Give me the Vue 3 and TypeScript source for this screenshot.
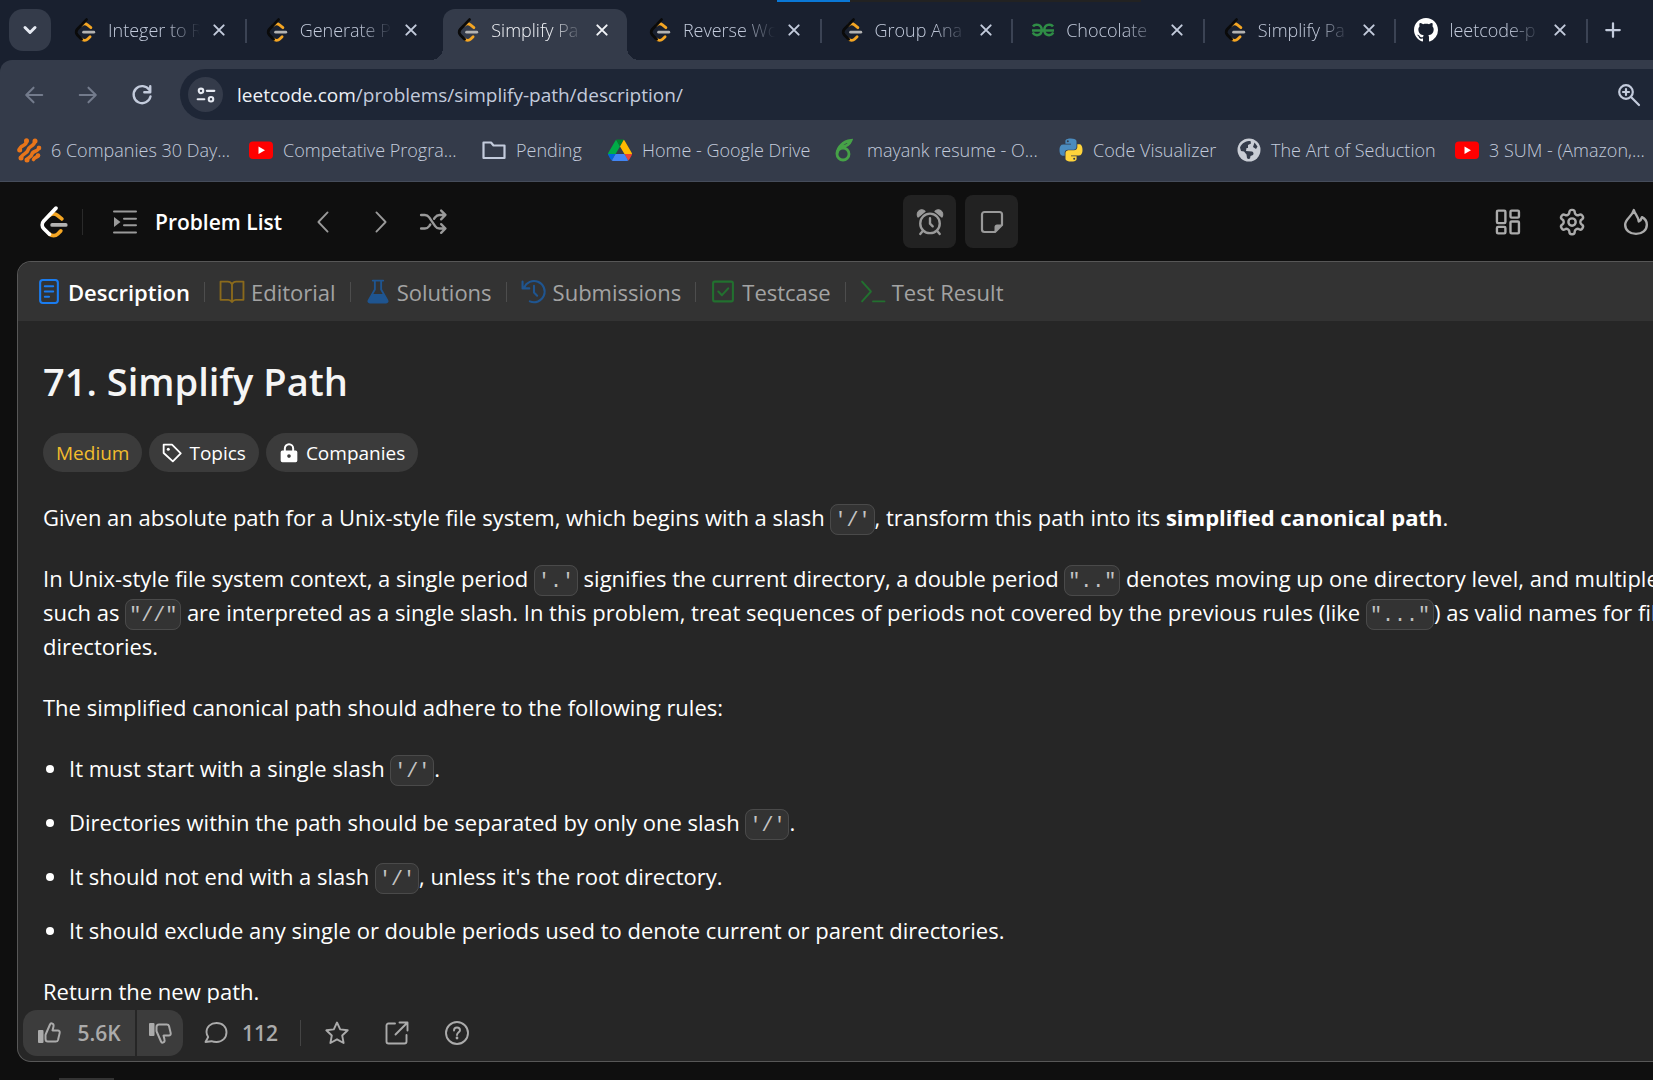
<script setup lang="ts">
interface BrowserTab { title: string; icon: string; active?: boolean }
interface Bookmark { label: string; icon: string; width: number }
interface PanelTab { label: string; icon: string; tone: string; active?: boolean }

const leet = (stem: string) =>
  `<g fill="none" stroke-width="2.8" stroke-linecap="round"><path stroke="#f5a623" d="M8.6 7.100c1.700-1.500 4.200-1.500 5.900-.2l3.400 2.800M8.600 21c1.700 1.700 4.500 1.700 6.200 0l2.300-2.300"/><path stroke="#b3b3b3" d="M10.600 14.200h10.200"/><path stroke="${stem}" stroke-linejoin="round" d="M13.500 1.600L4.300 11.300c-1.500 1.700-1.500 4.200.1 5.800L8.600 21.200"/></g>`

const s = (body: string, w = 2) =>
  `<g fill="none" stroke="currentColor" stroke-width="${w}" stroke-linecap="round" stroke-linejoin="round">${body}</g>`

const thumb =
  '<rect x="1" y="9" width="5.500" height="13" rx="1" fill="currentColor"/><g fill="none" stroke="currentColor" stroke-width="2" stroke-linejoin="round"><path d="M9.500 11.500L13 3.500c.3-.9 1-1.300 1.900-1.100 1.500.3 2 1.600 1.600 3l-1 4h5.300c1.300 0 2.200 1.200 1.900 2.500l-1.700 7c-.3 1.100-1.100 1.700-2.200 1.700H11c-1.500 0-2.500-1-2.500-2.500v-4.200z"/></g>'

const icons: Record<string, string> = {
  leetDark: leet('#0a0a0a'),
  leetLight: leet('#ffffff'),
  chevronDown: s('<path d="M7 9.500l5 5 5-5"/>', 3),
  close: s('<path d="M4 4l16 16M20 4L4 20"/>', 3.4),
  plus: s('<path d="M12 3v18M3 12h18"/>', 3),
  back: s('<path d="M21 12H4M11.500 4L3.500 12l8 8"/>', 2.200),
  forward: s('<path d="M3 12h17M12.500 4l8 8-8 8"/>', 2.200),
  reload: s('<path d="M20 6.500A9.300 9.300 0 1 0 21.300 13.500M21 2.500v6.500h-6.500"/>', 2.600),
  tune: s('<circle cx="6" cy="7" r="2.700"/><path d="M13 7h9M2 17h8"/><circle cx="18" cy="17" r="2.700"/>', 2.500),
  magnify: s('<circle cx="9" cy="9" r="6.800"/><path d="M14.500 14.500l7.500 7.500M9 6v6M6 9h6"/>', 2.200),
  gfg: '<g fill="none" stroke="#2f8d46" stroke-width="2.500"><path d="M2 8.500C4 5.500 10.700 6 10.700 12S4 18.500 1.800 14.500"/><path d="M1 12.500h22"/><path d="M22 8.500C20 5.500 13.300 6 13.300 12S20 18.500 22.200 14.500"/></g>',
  github: '<path transform="scale(1.5)" fill="#fff" d="M8 0C3.580 0 0 3.580 0 8c0 3.540 2.290 6.530 5.470 7.590.4.070.55-.17.55-.38 0-.19-.01-.82-.01-1.490-2.010.37-2.530-.49-2.690-.94-.09-.23-.48-.94-.82-1.130-.28-.15-.68-.52-.01-.53.63-.01 1.080.58 1.230.82.72 1.210 1.870.87 2.330.66.07-.52.28-.87.51-1.070-1.780-.2-3.640-.89-3.640-3.950 0-.87.31-1.590.82-2.150-.08-.2-.36-1.020.08-2.120 0 0 .67-.21 2.200.82.64-.18 1.320-.27 2-.27s1.360.09 2 .27c1.530-1.040 2.200-.82 2.200-.82.44 1.100.16 1.920.08 2.120.51.56.82 1.270.82 2.150 0 3.070-1.870 3.750-3.650 3.950.29.25.54.73.54 1.480 0 1.070-.01 1.930-.01 2.200 0 .21.15.46.55.38A8.010 8.010 0 0 0 16 8c0-4.420-3.580-8-8-8z"/>',
  hash: '<g stroke="#e8751a" stroke-width="3.600" stroke-linecap="round" fill="none"><path d="M9.500 3c0 6-6.500 3-7 9M18 3c-1 6-6 4.500-7 9s-6 3-7 8M22 9.500c-1 5-6 2.500-7 6.500s-4 2.500-5 6M21 17.500c-1 2.500-3 1-4.500 4"/></g><g fill="#e8751a"><circle cx="9.500" cy="2.800" r="2.500"/><circle cx="18" cy="3" r="2.500"/><circle cx="2.700" cy="12" r="2.500"/><circle cx="4" cy="20" r="2.500"/><circle cx="10" cy="22" r="2.500"/><circle cx="22" cy="10" r="2.300"/><circle cx="21" cy="17.500" r="2.300"/></g>',
  youtube: '<rect x="0" y="3.500" width="24" height="17.500" rx="4" fill="#f00"/><path d="M9.500 8.500v7.500l6.500-3.750z" fill="#fff"/>',
  folder: s('<path d="M1.500 20V4.500h7.500l2.500 3h11V20z"/>', 2.200),
  drive: '<g transform="translate(0 1.500) scale(.275)"><path d="m6.600 66.850 3.850 6.650c.8 1.400 1.950 2.500 3.300 3.300l13.750-23.800h-27.500c0 1.550.4 3.100 1.200 4.500z" fill="#0066da"/><path d="m43.650 25-13.750-23.800c-1.350.8-2.500 1.900-3.300 3.300l-25.400 44a9.060 9.060 0 0 0-1.200 4.500h27.500z" fill="#00ac47"/><path d="m73.550 76.800c1.350-.8 2.500-1.900 3.300-3.300l1.600-2.750 7.650-13.250c.8-1.400 1.200-2.950 1.200-4.500h-27.500l5.850 11.500z" fill="#ea4335"/><path d="m43.650 25 13.750-23.800c-1.350-.8-2.900-1.200-4.500-1.200h-18.500c-1.600 0-3.150.450-4.500 1.200z" fill="#00832d"/><path d="m59.800 53h-32.300l-13.750 23.800c1.350.8 2.900 1.200 4.500 1.200h50.800c1.600 0 3.150-.450 4.500-1.200z" fill="#4285f4"/><path d="m73.400 26.500-12.700-22c-.8-1.400-1.950-2.500-3.300-3.300l-13.750 23.800 16.150 28h27.450c0-1.550-.4-3.100-1.200-4.500z" fill="#ffba00"/></g>',
  overleaf: '<g fill="none" stroke="#46a247" stroke-width="2.800"><ellipse cx="10" cy="16" rx="6" ry="6"/><path d="M4 15.500C4.500 9 10 3.500 18 2.500c-1.500 4-5 6-9.500 6.500"/></g>',
  python: '<path d="M11.900.5C6 .5 6.400 3.100 6.400 3.100v2.600h5.600v.8H4.200S.500 6.100.500 12s3.200 5.700 3.200 5.700h2v-2.800s-.1-3.200 3.200-3.200h5.500s3.100 0 3.100-3V3.600S18 .5 11.900.500zM8.800 2.300a1 1 0 1 1 0 2 1 1 0 0 1 0-2z" fill="#4b8bbe"/><path transform="rotate(180 12 12)" d="M11.900.5C6 .5 6.400 3.100 6.400 3.100v2.600h5.600v.8H4.200S.500 6.100.500 12s3.200 5.700 3.200 5.700h2v-2.800s-.1-3.200 3.200-3.200h5.500s3.100 0 3.100-3V3.600S18 .5 11.900.500zM8.800 2.300a1 1 0 1 1 0 2 1 1 0 0 1 0-2z" fill="#ffd43b"/>',
  globe: '<circle cx="12" cy="12" r="11.500" fill="#c9cdd5"/><path fill="#343b4a" d="M3 9.500C5 4.500 9 3 13.500 3l.5 2.500-3 1.500v3H9.500l-.5 3 6 .5c1.500.5 2 2 1 3.500l-2.500 1-.5 2.500c-1 .8-2.500.5-3-.5l-.5-3.500-2.500-3-3-.500zM17.500 4.500l3 4-1.500 2.500-3-2z"/>',
  list: '<g stroke="currentColor" stroke-width="2" fill="none" stroke-linecap="round"><path d="M1 1.500h22M11 8.700h12M11 15.300h12M1 22.500h22"/></g><path d="M1 7l6.500 5L1 17z" fill="currentColor"/>',
  prev: s('<path d="M17 1.500L7 12l10 10.500"/>'),
  next: s('<path d="M7 1.500L17 12 7 22.500"/>'),
  shuffle: s('<path d="M1 5.500h3.500c2 0 3 .8 4 2.200l5.500 8.100c1 1.500 2 2.200 4 2.200h5M1 18h3.500c2 0 3-.8 4-2.200l1-1.500M13 9l1-1.300c1-1.500 2-2.200 4-2.200h5M19.500 1.500l4 4-4 4M19.500 14l4 4-4 4"/>', 2.2),
  alarm: s('<circle cx="12" cy="13.300" r="9"/><path d="M12 8.500v5l2.500 2.500M5.500 20l-2.500 3M18.500 20l2.500 3"/>', 2.2) + '<path d="M1 7.500a4.200 4.200 0 0 1 6.500-5.300zM23 7.500a4.200 4.200 0 0 0-6.500-5.300z" fill="currentColor" stroke="currentColor" stroke-linejoin="round"/>',
  note: s('<path d="M15 22H4.500A2.500 2.500 0 0 1 2 19.500v-15A2.500 2.500 0 0 1 4.500 2h15A2.500 2.500 0 0 1 22 4.500V15z"/>', 2.2) + '<path d="M14.500 22.500v-5.500c0-1.500 1-2.500 2.500-2.500h5.500z" fill="currentColor"/>',
  grid: s('<rect x="1.800" y="1.500" width="7.800" height="11.500" rx="1"/><rect x="14.300" y="1.500" width="7.800" height="6.500" rx="1"/><rect x="1.800" y="16.500" width="7.800" height="6" rx="1"/><rect x="14.300" y="11.500" width="7.800" height="11" rx="1"/>', 2.2),
  gear: '<g transform="translate(-1.400 -1.400) scale(1.120)">' + s('<circle cx="12" cy="12" r="3"/><path d="M12.220 2h-.44a2 2 0 0 0-2 2v.18a2 2 0 0 1-1 1.730l-.43.25a2 2 0 0 1-2 0l-.15-.08a2 2 0 0 0-2.730.73l-.22.38a2 2 0 0 0 .73 2.730l.15.1a2 2 0 0 1 1 1.720v.51a2 2 0 0 1-1 1.740l-.15.09a2 2 0 0 0-.73 2.730l.22.38a2 2 0 0 0 2.730.73l.15-.08a2 2 0 0 1 2 0l.43.25a2 2 0 0 1 1 1.730V20a2 2 0 0 0 2 2h.44a2 2 0 0 0 2-2v-.18a2 2 0 0 1 1-1.730l.43-.25a2 2 0 0 1 2 0l.15.08a2 2 0 0 0 2.730-.73l.22-.39a2 2 0 0 0-.73-2.730l-.15-.08a2 2 0 0 1-1-1.740v-.5a2 2 0 0 1 1-1.740l.15-.09a2 2 0 0 0 .73-2.730l-.22-.38a2 2 0 0 0-2.730-.73l-.15.08a2 2 0 0 1-2 0l-.43-.25a2 2 0 0 1-1-1.730V4a2 2 0 0 0-2-2z"/>') + '</g>',
  flame: s('<path d="M10 1c1 4 4 5.500 4.500 10.500 1.500-.8 2.500-2 3-4C20.500 9 22 11.500 22 14.500c0 5-4.300 8.500-10 8.500S2 19.500 2 14.500C2 9 8.500 7 10 1z"/>', 2.200),
  doc: s('<rect x="3.500" y="1" width="17" height="22" rx="2.500"/><path d="M8 7h8M8 12h8M8 17h4"/>'),
  book: s('<path d="M12 5c-1-1.800-2-2.500-4-2.500H1v17.500h7.500c1.500 0 2.500.5 3.500 2 1-1.500 2-2 3.500-2H23V2.500h-7c-2 0-3 .7-4 2.500zM12 5v16"/>', 1.800),
  flask: s('<path d="M7 1.500h10M9 2v8L3 20.500c-.6 1.200 0 2 1.200 2h15.600c1.200 0 1.800-.8 1.200-2L15 10V2"/>', 1.800) + '<path d="M6.500 14.500h11l3.500 6.500c.4 1 0 1.500-1 1.500H4c-1 0-1.400-.5-1-1.500z" fill="currentColor"/>',
  history: s('<path d="M2.500 8.500A10.200 10.200 0 1 1 8 21.500M1 2.500v6.500h6.500M12 6.500V13l3 3"/>'),
  check: s('<rect x="2.500" y="2.500" width="19" height="19" rx="1.500"/><path d="M7.500 12l3.500 3.500L17 9"/>'),
  terminal: s('<path d="M1.500 2.500L10 12l-8.500 9.500M12 21.500h11"/>', 1.800),
  tag: s('<path d="M2 2h10l10.500 10.500-9.500 9.500L2 12z"/>', 2.200) + '<circle cx="7.500" cy="7.500" r="1.800" fill="currentColor"/>',
  lock: '<path d="M7 10V6.500a5 5 0 0 1 10 0V10" fill="none" stroke="currentColor" stroke-width="2.400"/><path fill="currentColor" fill-rule="evenodd" d="M4 9h16a2 2 0 0 1 2 2v10a2 2 0 0 1-2 2H4a2 2 0 0 1-2-2V11a2 2 0 0 1 2-2zm8 4.500a2.200 2.200 0 1 0 0 4.400 2.200 2.200 0 0 0 0-4.400z"/>',
  like: thumb,
  dislike: `<g transform="matrix(1 0 0 -1 0 24)">${thumb}</g>`,
  comment: s('<path d="M12.500 2C6.500 2 2.500 6 2.500 11c0 2 .6 3.500 1.700 5L1.500 21l6-.8c1.500.6 3 .8 5 .8 6 0 10-4.300 10-9.700S18.500 2 12.500 2z"/>', 1.900),
  star: s('<path d="M12 1.500l3.200 6.900 7.500.9-5.500 5.200 1.400 7.500L12 18.300l-6.600 3.700 1.400-7.500L1.300 9.300l7.500-.9z"/>', 1.900),
  share: s('<path d="M10 2.500H3.500c-1.200 0-2 .8-2 2v16c0 1.200.8 2 2 2h16c1.200 0 2-.8 2-2V14M10.500 13.500L22.500 1.500M14.500 1.500h8v8"/>', 1.900),
  help: s('<circle cx="12" cy="12" r="11"/><path d="M9 9.500c0-1.800 1.300-3 3-3s3 1.200 3 2.800c0 2-3 2.200-3 4.700"/>', 1.900) + '<circle cx="12" cy="17" r="1.400" fill="currentColor"/>',
}

const tabs: BrowserTab[] = [
  { title: 'Integer to R', icon: 'leetDark' },
  { title: 'Generate P', icon: 'leetDark' },
  { title: 'Simplify Pa', icon: 'leetDark', active: true },
  { title: 'Reverse Wo', icon: 'leetDark' },
  { title: 'Group Ana', icon: 'leetDark' },
  { title: 'Chocolate', icon: 'gfg' },
  { title: 'Simplify Pa', icon: 'leetDark' },
  { title: 'leetcode-p', icon: 'github' },
]

const bookmarks: Bookmark[] = [
  { label: '6 Companies 30 Day...', icon: 'hash', width: 232 },
  { label: 'Competative Progra...', icon: 'youtube', width: 233 },
  { label: 'Pending', icon: 'folder', width: 126 },
  { label: 'Home - Google Drive', icon: 'drive', width: 225 },
  { label: 'mayank resume - O...', icon: 'overleaf', width: 226 },
  { label: 'Code Visualizer', icon: 'python', width: 178 },
  { label: 'The Art of Seduction', icon: 'globe', width: 218 },
  { label: '3 SUM - (Amazon,...', icon: 'youtube', width: 196 },
]

const panelTabs: PanelTab[] = [
  { label: 'Description', icon: 'doc', tone: 'blue', active: true },
  { label: 'Editorial', icon: 'book', tone: 'amber' },
  { label: 'Solutions', icon: 'flask', tone: 'navy' },
  { label: 'Submissions', icon: 'history', tone: 'navy' },
  { label: 'Testcase', icon: 'check', tone: 'green' },
  { label: 'Test Result', icon: 'terminal', tone: 'green' },
]
</script>

<template>
  <div class="screen">
    <header class="browser">
      <div class="progress"><span class="progress-on"></span><span class="progress-off"></span></div>
      <div class="strip">
        <button class="tab-search" aria-label="Search tabs"><svg class="i24" viewBox="0 0 24 24" v-html="icons.chevronDown" /></button>
        <nav class="tabs">
          <div v-for="(t, i) in tabs" :key="i" class="tab" :class="{ active: t.active, plain: i === 1 }">
            <svg class="favicon" viewBox="0 0 24 24" v-html="icons[t.icon]" />
            <span class="tab-title">{{ t.title }}</span>
            <button class="tab-close" aria-label="Close tab"><svg class="i14" viewBox="0 0 24 24" v-html="icons.close" /></button>
          </div>
        </nav>
        <button class="new-tab" aria-label="New tab"><svg class="i18" viewBox="0 0 24 24" v-html="icons.plus" /></button>
      </div>
      <div class="toolbar">
        <button class="tool dim" aria-label="Back"><svg class="i22" viewBox="0 0 24 24" v-html="icons.back" /></button>
        <button class="tool dim" aria-label="Forward"><svg class="i22" viewBox="0 0 24 24" v-html="icons.forward" /></button>
        <button class="tool" aria-label="Reload"><svg class="i22" viewBox="0 0 24 24" v-html="icons.reload" /></button>
        <div class="omnibox">
          <button class="site-info" aria-label="Site information"><svg class="i20" viewBox="0 0 24 24" v-html="icons.tune" /></button>
          <span class="url"><b>leetcode.com</b>/problems/simplify-path/description/</span>
          <button class="zoom" aria-label="Zoom"><svg class="i24" viewBox="0 0 24 24" v-html="icons.magnify" /></button>
        </div>
      </div>
      <nav class="bookmarks">
        <a v-for="b in bookmarks" :key="b.label" href="#" class="bookmark" :style="{ width: b.width + 'px' }">
          <svg class="i24" viewBox="0 0 24 24" v-html="icons[b.icon]" /><span>{{ b.label }}</span>
        </a>
      </nav>
    </header>

    <div class="site-nav">
      <a href="#" class="logo" aria-label="Home"><svg viewBox="0 0 24 24" v-html="icons.leetLight" /></a>
      <i class="nav-divider"></i>
      <a href="#" class="problem-list"><svg class="i24" viewBox="0 0 24 24" v-html="icons.list" /><span>Problem List</span></a>
      <button class="nav-btn prev" aria-label="Previous"><svg class="i22" viewBox="0 0 24 24" v-html="icons.prev" /></button>
      <button class="nav-btn next" aria-label="Next"><svg class="i22" viewBox="0 0 24 24" v-html="icons.next" /></button>
      <button class="nav-btn" aria-label="Shuffle"><svg class="i26" viewBox="0 0 24 24" v-html="icons.shuffle" /></button>
      <div class="nav-mid">
        <button class="square" aria-label="Timer"><svg class="i26" viewBox="0 0 24 24" v-html="icons.alarm" /></button>
        <button class="square" aria-label="Notes"><svg class="i24" viewBox="0 0 24 24" v-html="icons.note" /></button>
      </div>
      <div class="nav-right">
        <button class="nav-btn" aria-label="Layouts"><svg class="i26" viewBox="0 0 24 24" v-html="icons.grid" /></button>
        <button class="nav-btn" aria-label="Settings"><svg class="i26" viewBox="0 0 24 24" v-html="icons.gear" /></button>
        <button class="nav-btn" aria-label="Streak"><svg class="i26" viewBox="0 0 24 24" v-html="icons.flame" /></button>
      </div>
    </div>

    <main class="panel">
      <nav class="panel-tabs">
        <template v-for="(t, i) in panelTabs" :key="t.label">
          <i v-if="i" class="sep"></i>
          <button class="panel-tab" :class="{ current: t.active }">
            <svg :class="['panel-icon', t.tone]" viewBox="0 0 24 24" v-html="icons[t.icon]" />{{ t.label }}
          </button>
        </template>
      </nav>
      <article class="content">
        <h1>71. Simplify Path</h1>
        <div class="pills">
          <span class="pill medium">Medium</span>
          <button class="pill"><svg class="i20" viewBox="0 0 24 24" v-html="icons.tag" />Topics</button>
          <button class="pill"><svg class="i20" viewBox="0 0 24 24" v-html="icons.lock" />Companies</button>
        </div>
        <p>Given an absolute path for a Unix-style file system, which begins with a slash <code>'/'</code>, transform this path into its <strong>simplified canonical path</strong>.</p>
        <p>
          In Unix-style file system context, a single period <code>'.'</code> signifies the current directory, a double period <code>".."</code> denotes moving up one directory level, and multiple<br>
          such as <code>"//"</code> are interpreted as a single slash. In this problem, treat sequences of periods not covered by the previous rules (like <code>"..."</code>) as valid names for file<br>
          directories.
        </p>
        <p>The simplified canonical path should adhere to the following rules:</p>
        <ul>
          <li>It must start with a single slash <code>'/'</code>.</li>
          <li>Directories within the path should be separated by only one slash <code>'/'</code>.</li>
          <li>It should not end with a slash <code>'/'</code>, unless it's the root directory.</li>
          <li>It should exclude any single or double periods used to denote current or parent directories.</li>
        </ul>
        <p>Return the new path.</p>
      </article>
      <footer class="actions">
        <div class="votes">
          <button class="vote up"><svg class="i24" viewBox="0 0 24 24" v-html="icons.like" />5.6K</button>
          <button class="vote down" aria-label="Dislike"><svg class="i24" viewBox="0 0 24 24" v-html="icons.dislike" /></button>
        </div>
        <button class="act comments"><svg class="i24" viewBox="0 0 24 24" v-html="icons.comment" />112</button>
        <i class="act-divider"></i>
        <button class="act" aria-label="Favourite"><svg class="i24" viewBox="0 0 24 24" v-html="icons.star" /></button>
        <button class="act" aria-label="Share"><svg class="i24" viewBox="0 0 24 24" v-html="icons.share" /></button>
        <button class="act" aria-label="Help"><svg class="i24" viewBox="0 0 24 24" v-html="icons.help" /></button>
      </footer>
    </main>
    <div class="below"><span class="handle"></span></div>
  </div>
</template>

<style>
body { margin: 0; background: #0f0f0f; }
</style>

<style scoped>
* { box-sizing: border-box; }
.screen {
  display: flex;
  flex-direction: column;
  height: 100vh;
  overflow: hidden;
  background: #0f0f0f;
  color: #fff;
  font-family: "Open Sans", "Noto Sans", sans-serif;
  font-size: 20px;
  white-space: nowrap;
}
button { margin: 0; padding: 0; border: 0; background: none; color: inherit; font: inherit; display: flex; align-items: center; justify-content: center; }
a { color: inherit; text-decoration: none; }
svg { display: block; flex: none; overflow: visible; }
.i14 { width: 14px; height: 14px; }
.i18 { width: 18px; height: 18px; }
.i20 { width: 20px; height: 20px; }
.i22 { width: 22px; height: 22px; }
.i24 { width: 24px; height: 24px; }
.i26 { width: 26px; height: 26px; }

/* browser chrome */
.browser { position: relative; flex: none; background: #19202f; color: #c3cbdc; border-bottom: 1px solid #454c5a; }
.progress { position: absolute; top: 0; left: 47%; right: 31%; display: flex; height: 2px; }
.progress-on { width: 20%; background: #0a78d6; }
.progress-off { flex: 1; background: #222222; }
.strip { display: flex; align-items: flex-start; height: 60px; padding-top: 9px; }
.tab-search { width: 42px; height: 42px; margin: 0 4px 0 9px; border-radius: 14px; background: #343b4a; color: #e6eaf2; }
.tabs { display: flex; flex: 1; }
.tab { position: relative; display: flex; flex: 1; align-items: center; height: 42px; padding: 0 18px; font-size: 18px; font-weight: 300; }
.tab::after { content: ""; position: absolute; right: 0; top: 10px; width: 2px; height: 24px; background: #3b4354; }
.tab.plain::after { display: none; }
.tab.active { color: #f2f4f8; }
.tab.active::before { content: ""; position: absolute; left: 5px; right: 3px; top: 0; height: 51px; border-radius: 12px 12px 0 0; background: #343b4a; }
.tab.active::after { left: -7px; right: -9px; top: 39px; width: auto; height: 12px; background: radial-gradient(circle at 0 0, #19202f 12px, #343b4a 12px) left / 12px 12px no-repeat, radial-gradient(circle at 100% 0, #19202f 12px, #343b4a 12px) right / 12px 12px no-repeat; }
.tab > * { position: relative; z-index: 1; }
.favicon { width: 24px; height: 24px; margin-right: 11px; }
.tab-title { width: 98px; overflow: hidden; -webkit-mask-image: linear-gradient(90deg, #000 60%, transparent 94%); mask-image: linear-gradient(90deg, #000 60%, transparent 94%); }
.tab-close { margin-left: 6px; }
.new-tab { width: 50px; height: 42px; margin-right: 15px; }
.toolbar { display: flex; align-items: center; height: 69px; padding: 0 0 0 22px; border-radius: 12px 0 0 0; background: #343b4a; }
.tool { width: 24px; height: 36px; margin-right: 30px; }
.tool.dim { color: #737b8c; }
.omnibox { display: flex; flex: 1; align-items: center; height: 51px; margin-left: -4px; padding: 0 12px 0 8px; border-radius: 26px 0 0 26px; background: #1e2636; }
.site-info { width: 35px; height: 35px; border-radius: 50%; background: #343b4a; color: #e6eaf2; }
.url { flex: 1; margin-left: 14px; font-size: 19px; }
.url b { font-weight: 400; color: #eef1f7; }
.bookmarks { display: flex; align-items: center; height: 52px; padding: 0 0 10px 17px; background: #343b4a; font-size: 18px; font-weight: 300; }
.bookmark { display: flex; flex: none; align-items: center; gap: 10px; height: 42px; }

/* site navigation */
.site-nav { display: flex; flex: none; align-items: center; height: 79px; padding: 0 4px 0 38px; color: #9a9a9a; }
.logo svg { width: 32px; height: 34px; }
.nav-divider { width: 1px; height: 26px; margin: 0 30px 0 12px; background: #2a2a2a; }
.problem-list { display: flex; align-items: center; gap: 18px; font-size: 21px; font-weight: 600; }
.problem-list span { color: #fff; }
.nav-btn.prev { margin-left: 30px; }
.nav-btn.next { margin: 0 28px 0 36px; }
.nav-mid { display: flex; gap: 9px; margin-left: auto; }
.square { width: 53px; height: 53px; border-radius: 8px; background: #222222; }
.nav-right { display: flex; gap: 38px; margin-left: auto; padding-left: 20px; color: #ababab; }

/* problem panel */
.panel { display: flex; flex: 1; flex-direction: column; min-height: 0; margin-left: 17px; overflow: hidden; border: 1px solid #575757; border-right: 0; border-radius: 14px 0 0 14px; background: #262626; }
.panel-tabs { display: flex; flex: none; align-items: center; height: 59px; padding-left: 18px; background: #333333; }
.panel-tab { gap: 6px; color: #a3a3a3; font-size: 22px; }
.panel-tab.current { color: #fff; font-weight: 600; }
.panel-icon { width: 26px; height: 25px; }
.blue { color: #1a7cf0; }
.amber { color: #8a6a1c; }
.navy { color: #1f5590; }
.green { color: #22702f; }
.sep { width: 1px; height: 20px; margin: 0 14px; background: #4d4d4d; }
.content { flex: 1; min-height: 0; overflow: hidden; padding: 34px 0 0 25px; font-size: 22px; line-height: 34px; }
h1 { margin: 0; color: #f5f5f5; font-size: 38px; font-weight: 600; line-height: 52px; }
.pills { display: flex; gap: 7px; margin: 26px 0 28px; }
.pill { display: flex; align-items: center; gap: 7px; height: 39px; padding: 0 13px; border-radius: 20px; background: #3b3b3b; font-size: 19px; }
.pill.medium { color: #f2bd2d; }
p { margin: 0 0 27px; }
ul { margin: 0 0 27px; padding-left: 26px; }
li + li { margin-top: 20px; }
code { padding: 4px 3px 2px; border: 1px solid #4a4a4a; border-radius: 8px; background: #333333; color: #c4c4c4; font-family: "Liberation Mono", monospace; font-size: 20px; line-height: 20px; }
.actions { display: flex; flex: none; align-items: center; height: 58px; padding: 2px 0 0 5px; color: #ababab; font-size: 21px; font-weight: 600; }
.votes { display: flex; gap: 2px; overflow: hidden; border-radius: 14px; }
.vote { height: 46px; background: #3c3c3c; }
.vote.up { width: 112px; gap: 16px; }
.vote.down { width: 46px; }
.act { margin-right: 36px; }
.comments { gap: 14px; margin: 0 22px 0 21px; }
.act-divider { width: 1px; height: 26px; margin-right: 24px; background: #444444; }
.below { display: flex; flex: none; align-items: flex-end; height: 18px; padding-left: 59px; }
.handle { width: 55px; height: 2px; background: #333333; }
</style>
